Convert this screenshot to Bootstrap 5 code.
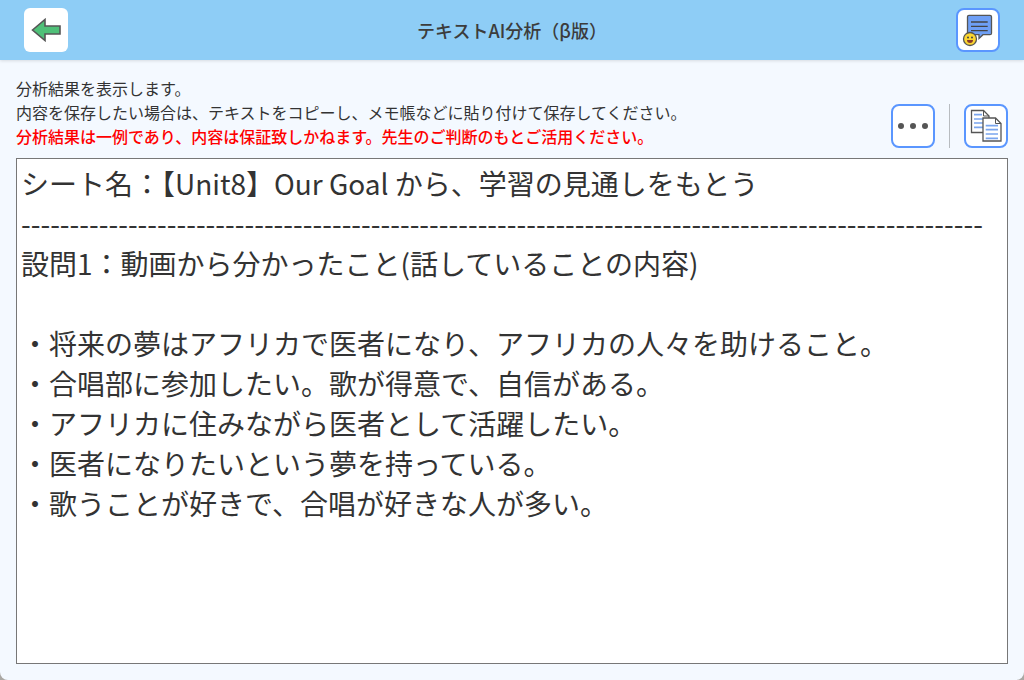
<!DOCTYPE html>
<html lang="ja">
<head>
<meta charset="utf-8">
<title>テキストAI分析</title>
<link rel="stylesheet" href="https://cdn.jsdelivr.net/npm/bootstrap@5.3.0/dist/css/bootstrap.min.css">
<style>
html{height:100%;margin:0;overflow:hidden;background:#aaa8a4}
body{height:100%;margin:0;overflow:hidden;font-family:"Noto Sans CJK JP","Noto Sans",sans-serif;background:#f4f9ff;color:#333;width:1024px;height:680px;border-radius:0 0 8px 8px}
.app-head{height:60px;background:#8ecdf6;box-shadow:0 1px 3px rgba(0,0,0,.12);padding:0 24px}
.head-title{font-size:18px;font-weight:500;color:#3c3c3c;line-height:24px}
.tile{width:44px;height:44px;border-radius:6px;background:#fff;padding:0;border:0;display:flex;align-items:center;justify-content:center;flex:none}
.tile-line{border:2px solid #5a96ff;border-radius:8px}
.app-body{padding:16px 16px 16px;height:620px}
.top-row{margin-bottom:10px}
.intro{font-size:16px;line-height:24px;color:#333}
.warn{color:#f00;font-weight:500}
.sep{width:1px;height:44px;background:#b8bcc0;margin:0 14px}
.result{flex:1;min-height:0;background:#fff;border:1px solid #777;padding:4px 5px 5px 4px;font-size:28px;line-height:40px;color:#333;white-space:pre-wrap;overflow:hidden}
</style>
</head>
<body>
<header class="app-head d-flex align-items-center justify-content-between">
  <button class="tile" aria-label="戻る">
    <svg width="30" height="24" viewBox="0 0 30 24"><path d="M1.500 12 14 1.500V8H29V16H14V22.500Z" fill="#4fc078" stroke="#555" stroke-width="1.600"/></svg>
  </button>
  <div class="head-title">テキストAI分析（β版）</div>
  <button class="tile tile-line" aria-label="コメント">
    <svg width="36" height="36" viewBox="0 0 36 36"><path d="M9 3.300H30a1.500 1.500 0 0 1 1.500 1.500V21.200A1.500 1.500 0 0 1 30 22.700H23L19 26.500V22.700H9A1.500 1.500 0 0 1 7.500 21.200V4.800A1.500 1.500 0 0 1 9 3.300Z" fill="#6e9ff5" stroke="#555" stroke-width="1.300"/><path d="M11 10H27.700M11 14.300H27.700M11 18.700H27.700" stroke="#444" stroke-width="1.300"/><circle cx="10" cy="27" r="6.500" fill="#fcd62f" stroke="#555" stroke-width="1.300"/><circle cx="8" cy="25.500" r="1" fill="#444"/><circle cx="12" cy="25.500" r="1" fill="#444"/><path d="M7 28h6a3 3 0 0 1-6 0Z" fill="#8a3a2a"/></svg>
  </button>
</header>
<main class="app-body d-flex flex-column">
  <div class="top-row d-flex justify-content-between align-items-end">
    <div class="intro">
      <div>分析結果を表示します。</div>
      <div>内容を保存したい場合は、テキストをコピーし、メモ帳などに貼り付けて保存してください。</div>
      <div class="warn">分析結果は一例であり、内容は保証致しかねます。先生のご判断のもとご活用ください。</div>
    </div>
    <div class="d-flex align-items-center">
      <button class="tile tile-line" aria-label="その他">
        <svg width="32" height="8" viewBox="0 0 32 8"><circle cx="4" cy="4" r="3" fill="#555"/><circle cx="16" cy="4" r="3" fill="#555"/><circle cx="28" cy="4" r="3" fill="#555"/></svg>
      </button>
      <div class="sep"></div>
      <button class="tile tile-line" aria-label="コピー">
        <svg width="32" height="34" viewBox="0 0 32 34"><path d="M1.500 1.500H13.500L19 7V23.500H1.500Z" fill="#fff" stroke="#555" stroke-width="1.300"/><path d="M13.500 1.500V7H19" fill="none" stroke="#555"/><path d="M4 5.700H12M4 10H16M4 14H16M4 18.300H16" stroke="#7aa5ee" stroke-width="1.700"/><path d="M13 9H25.500L31 14.500V32H13Z" fill="#fff" stroke="#555" stroke-width="1.300"/><path d="M25.500 9V14.500H31" fill="none" stroke="#555"/><path d="M15.700 16.700H28M15.700 20.700H28M15.700 25H28M15.700 29.300H28" stroke="#7aa5ee" stroke-width="1.700"/></svg>
      </button>
    </div>
  </div>
  <div class="result">シート名：【Unit8】Our Goal から、学習の見通しをもとう
---------------------------------------------------------------------------------------------------
設問1：動画から分かったこと(話していることの内容)

・将来の夢はアフリカで医者になり、アフリカの人々を助けること。
・合唱部に参加したい。歌が得意で、自信がある。
・アフリカに住みながら医者として活躍したい。
・医者になりたいという夢を持っている。
・歌うことが好きで、合唱が好きな人が多い。</div>
</main>
</body>
</html>
